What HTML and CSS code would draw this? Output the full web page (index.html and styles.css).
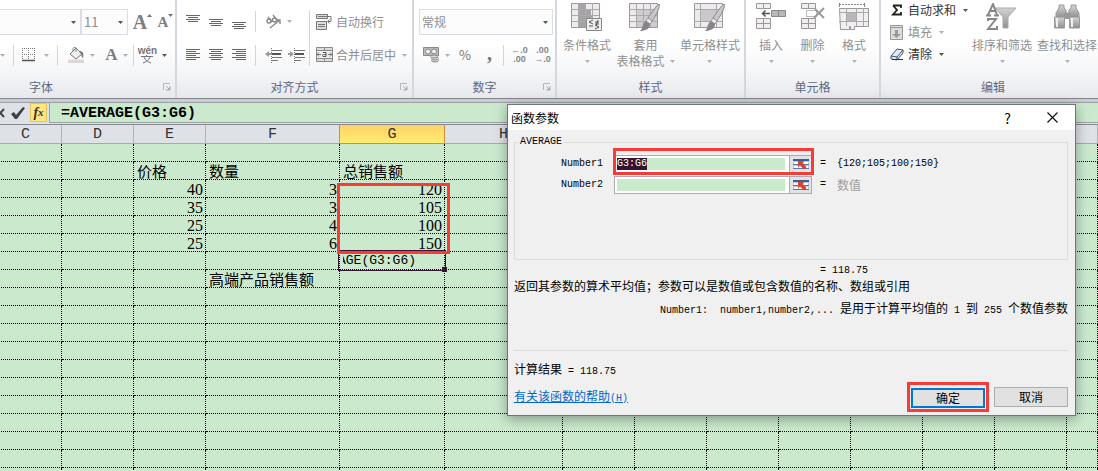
FILE: index.html
```html
<!DOCTYPE html>
<html lang="zh-CN">
<head>
<meta charset="utf-8">
<title>函数参数</title>
<link rel="stylesheet" href="styles.css">
</head>
<body>
<svg class="defs" aria-hidden="true">
  <defs>
    <linearGradient id="metal" x1="0" y1="0" x2="0" y2="1"><stop offset="0" stop-color="#d6d3d5"/><stop offset="1" stop-color="#8f8d90"/></linearGradient>
    <symbol id="arrow" viewBox="0 0 5 3"><path d="M0 0h5L2.500 3z"/></symbol>
    <symbol id="launch" viewBox="0 0 8 8"><path d="M.5 7V.5H7M3 3l3 3M7 3v4H3" fill="none" stroke="#b4b6ba"/><path d="M4 7h3V4z" fill="#a4a6aa"/></symbol>
    <symbol id="brush" viewBox="0 0 20 28"><path d="M19 0c2 2-3 11-7 17l-4-3C12 8 17 1 19 0z" fill="#c8c6c8" stroke="#8c8a8c"/><path d="M8 14l4 3-2 3-4-3z" fill="#eee" stroke="#999"/><path d="M6 17l4 3c0 5-5 7-10 7 3-2 2-8 6-10z" fill="#868487"/></symbol>
    <symbol id="picker" viewBox="0 0 16 12"><path d="M0 1h16v10H0z" fill="#b9c8e2"/><path d="M0 1h16v2H0z" fill="#3d5f9d"/><path d="M1 4h4v2H1zM6 4h4v2H6zM11 4h4v2h-4zM1 8h4v2H1zM6 8h4v2H6zM11 8h4v2h-4z" fill="#fff"/><path d="M0 6.500h6M0 10.500h16M11 6.500h5" stroke="#5877ad"/><path d="M5 3h6L9.500 5l4 4-2.500 2.500-4-4L5 9z" fill="#d8432b"/></symbol>
  </defs>
</svg>
<div class="app">
  <header class="ribbon">
    <section class="group g-font">
      <div class="rows">
        <div class="row">
          <span class="pick fontname"><select aria-label="字体"><option></option></select><svg class="dd dark"><use href="#arrow"/></svg></span>
          <span class="pick fontsize"><select aria-label="字号"><option>11</option></select><svg class="dd dark"><use href="#arrow"/></svg></span>
          <button class="tool growfont" aria-label="增大字号"><b class="glyph big">A</b><svg width="5" height="3" viewBox="0 0 5 3"><path d="M0 3L2.500 0 5 3z"/></svg></button>
          <button class="tool growfont" aria-label="减小字号"><b class="glyph small">A</b><svg width="5" height="3" viewBox="0 0 5 3"><path d="M0 0h5L2.500 3z"/></svg></button>
        </div>
        <div class="row second">
          <svg class="dd first"><use href="#arrow"/></svg><i class="sep"></i>
          <button class="tool border-tool" aria-label="边框"><svg width="14" height="14" viewBox="0 0 14 14"><path d="M.5 0v12M6.500 0v12M12.500 0v12M0 .5h13M0 6.500h13" stroke="#777" stroke-dasharray="1 1"/><path d="M0 12.500h13" stroke="#555" stroke-width="1.500"/></svg><svg class="dd"><use href="#arrow"/></svg></button><i class="sep"></i>
          <button class="tool fill-tool" aria-label="填充颜色"><svg width="17" height="16" viewBox="0 0 17 16"><path d="M2 7l6-6 6 6-6 5z" fill="#eee" stroke="#777"/><path d="M8 5V1c0-1-3-1-3 1v3" fill="none" stroke="#888"/><path d="M11 4c4 0 5 2 4 7-2-1-1-4-3-5z" fill="#777"/><path d="M0 12.500h16V16H0z" fill="#ddd5d9"/></svg><svg class="dd"><use href="#arrow"/></svg></button>
          <button class="tool w35" aria-label="字体颜色"><b class="glyph mid">A</b><svg class="dd"><use href="#arrow"/></svg></button><i class="sep"></i>
          <button class="tool w38" aria-label="拼音指南"><span class="pinyin"><b>wén</b><svg width="12" height="9" viewBox="0 0 12 9"><path d="M0 1.500h12M5 0l1 1M3 2c1 3 4 5 7 6M9 2c-1 3-4 5-7 6" fill="none" stroke="#777"/></svg></span><svg class="dd dark"><use href="#arrow"/></svg></button>
        </div>
      </div>
      <h2>字体</h2><button class="launcher" aria-label="字体设置"><svg><use href="#launch"/></svg></button>
    </section>
    <section class="group g-align">
      <div class="rows">
        <div class="row">
          <button class="tool w23" aria-label="顶端对齐"><svg width="15" height="16" viewBox="0 0 15 16"><path d="M0 1.500h14M2 3.500h10M0 5.500h14M2 7.500h10" stroke="#666"/></svg></button>
          <button class="tool w23" aria-label="垂直居中"><svg width="15" height="16" viewBox="0 0 15 16"><path d="M0 5.500h14M2 7.500h10M0 9.500h14M2 11.500h10" stroke="#666"/></svg></button>
          <button class="tool w23" aria-label="底端对齐"><svg width="15" height="16" viewBox="0 0 15 16"><path d="M0 8.500h14M2 10.500h10M0 12.500h14M2 14.500h10" stroke="#666"/></svg></button><i class="sep"></i>
          <button class="tool w35" aria-label="方向"><svg width="17" height="16" viewBox="0 0 17 16"><g fill="none" stroke="#888" stroke-width="1.400"><circle cx="4" cy="7" r="2"/><path d="M3 3l4 5M8 1l4 5"/><circle cx="9.500" cy="6" r="2"/><path d="M5 14l10-8M11 6h4v4"/></g></svg><svg class="dd"><use href="#arrow"/></svg></button>
        </div>
        <div class="row second">
          <button class="tool w23" aria-label="左对齐"><svg width="15" height="14" viewBox="0 0 15 14"><path d="M0 1.500h14M0 3.500h10M0 5.500h14M0 7.500h10M0 9.500h14M0 11.500h10" stroke="#666"/></svg></button>
          <button class="tool w23" aria-label="居中"><svg width="15" height="14" viewBox="0 0 15 14"><path d="M0 1.500h14M2 3.500h10M0 5.500h14M2 7.500h10M0 9.500h14M2 11.500h10" stroke="#666"/></svg></button>
          <button class="tool w23" aria-label="右对齐"><svg width="15" height="14" viewBox="0 0 15 14"><path d="M0 1.500h14M4 3.500h10M0 5.500h14M4 7.500h10M0 9.500h14M4 11.500h10" stroke="#666"/></svg></button><i class="sep"></i>
          <button class="tool w23" aria-label="减少缩进"><svg width="17" height="15" viewBox="0 0 17 15"><path d="M7 2.500h10M7 9.500h10M7 12.500h6" stroke="#777"/><path d="M7 6h9" stroke="#555" stroke-width="2"/><path d="M6.500 0v15" stroke="#777" stroke-dasharray="1 1"/><path d="M0 6l4-3v2h3v2H4v2z" fill="#999"/></svg></button>
          <button class="tool w23" aria-label="增加缩进"><svg width="17" height="15" viewBox="0 0 17 15"><path d="M7 2.500h10M7 9.500h10M7 12.500h6" stroke="#777"/><path d="M7 6h9" stroke="#555" stroke-width="2"/><path d="M6.500 0v15" stroke="#777" stroke-dasharray="1 1"/><path d="M6 6L2 3v2H0v2h2v2z" fill="#999"/></svg></button>
        </div>
      </div>
      <i class="sep tall"></i>
      <div class="rows">
        <div class="row"><button class="tool text"><svg width="17" height="16" viewBox="0 0 17 16"><path d="M.5.500h11v4H.5zM.5 7.500h10v8H.5z" fill="#ddd" stroke="#777"/><path d="M2 10.500h7M2 12.500h7M2 2.500h13v5h-3M13.500 5.500l-2 2 2 2" fill="none" stroke="#777"/></svg>自动换行</button></div>
        <div class="row second"><button class="tool text"><svg width="17" height="16" viewBox="0 0 17 16"><path d="M.5.500h16v14H.5zM0 3.500h16M0 11.500h16M8.500 0v4M8.500 11v4" fill="#ddd" stroke="#888"/><path d="M1 4h15v7H1z" fill="#eee"/><path d="M1 7.500h4M12 7.500h4M3 5.500l-2 2 2 2M14 5.500l2 2-2 2" fill="none" stroke="#777"/><path d="M7 5.500h3v4H7c-1.500-2 0-2 3-2" fill="none" stroke="#555"/></svg>合并后居中<svg class="dd"><use href="#arrow"/></svg></button></div>
      </div>
      <h2>对齐方式</h2><button class="launcher" aria-label="对齐设置"><svg><use href="#launch"/></svg></button>
    </section>
    <section class="group g-number">
      <div class="rows">
        <div class="row"><span class="pick format"><select aria-label="数字格式"><option>常规</option></select><svg class="dd dark"><use href="#arrow"/></svg></span></div>
        <div class="row second">
          <button class="tool w35" aria-label="会计数字格式"><svg width="17" height="16" viewBox="0 0 17 16"><path d="M.5.500h15v8H.5z" fill="#bbb" stroke="#888"/><circle cx="5" cy="4.500" r="2.500" fill="#eee" stroke="#888"/><circle cx="11" cy="4.500" r="2.500" fill="#eee" stroke="#888"/><g fill="#ddd" stroke="#888"><ellipse cx="12" cy="13.500" rx="3.500" ry="1.500"/><ellipse cx="12" cy="11.500" rx="3.500" ry="1.500"/><ellipse cx="11" cy="9.500" rx="3.500" ry="1.500"/></g></svg><svg class="dd"><use href="#arrow"/></svg></button>
          <button class="tool pct" aria-label="百分比">%</button><button class="tool comma" aria-label="千位分隔">,</button><i class="sep"></i>
          <button class="tool decimal" aria-label="增加小数位数"><span>←.0</span><span>.00</span></button>
          <button class="tool decimal" aria-label="减少小数位数"><span>.00</span><span>→.0</span></button>
        </div>
      </div>
      <h2>数字</h2><button class="launcher" aria-label="数字设置"><svg><use href="#launch"/></svg></button>
    </section>
    <section class="group g-style">
      <button class="large"><svg width="32" height="29" viewBox="0 0 32 29"><path d="M.5.500h28v24H.5z" fill="#efeaed" stroke="#999"/><path d="M8 1h6v23H8zM14 6h6v6h-6zM14 12h8v6h-8z" fill="#a5a3a6"/><path d="M0 6.500h28M0 12.500h28M0 18.500h28M7.500 0v24M14.500 0v24M21.500 0v24" fill="none" stroke="#aaa"/><path d="M15.500 15.500h15v12h-15z" fill="#eee" stroke="#888"/><path d="M22 17l-4 2 4 2M18 23h4M24 19h4M24 21h4M27 17l-2 6M24 22l4 2-4 2" fill="none" stroke="#555"/></svg><span>条件格式</span><svg class="dd"><use href="#arrow"/></svg></button>
      <button class="large table-style"><svg width="32" height="29" viewBox="0 0 32 29"><path d="M.5.500h28v24H.5z" fill="#efeaed" stroke="#999"/><path d="M7 6h21v18H7z" fill="#cfccd0"/><path d="M0 6.500h28M0 12.500h28M0 18.500h28M7.500 0v24M14.500 0v24M21.500 0v24" fill="none" stroke="#aaa"/><use href="#brush" x="11" y="1" width="20" height="28"/></svg><span>套用</span><span>表格格式<svg class="dd"><use href="#arrow"/></svg></span></button>
      <button class="large"><svg width="32" height="29" viewBox="0 0 32 29"><path d="M.5.500h28v24H.5z" fill="#efeaed" stroke="#999"/><path d="M0 6.500h28M0 18.500h28M6.500 0v24M22.500 0v24" stroke="#aaa"/><path d="M7 7h15v11H7z" fill="#cbc8cc"/><use href="#brush" x="11" y="1" width="20" height="28"/></svg><span>单元格样式</span><svg class="dd"><use href="#arrow"/></svg></button>
      <h2>样式</h2>
    </section>
    <section class="group g-cells">
      <button class="large"><svg width="32" height="29" viewBox="0 0 32 29"><path d="M1.500.500h14v5h-14zM1.500 15.500h14v10h-14zM1 20.500h14M8.500 0v5M8.500 15v11" fill="#f2edf0" stroke="#999"/><path d="M16.500 7.500h14v6h-14z" fill="#b9b7ba" stroke="#888"/><path d="M23.500 7v7" stroke="#888"/><path d="M15 10.500H8M10.500 7.500l-3 3 3 3" fill="none" stroke="#555" stroke-width="1.500"/></svg><span>插入</span><svg class="dd"><use href="#arrow"/></svg></button>
      <button class="large"><svg width="32" height="29" viewBox="0 0 32 29"><path d="M4.500.500h14v5h-14zM4.500 15.500h14v10h-14zM4 20.500h14M11.500 0v5M11.500 15v11" fill="#f2edf0" stroke="#999"/><path d="M9.500 7.500h10v6h-10z" fill="none" stroke="#777" stroke-dasharray="1 1"/><path d="M18 6l9 9M27 5L17 15" stroke="#999" stroke-width="2"/></svg><span>删除</span><svg class="dd"><use href="#arrow"/></svg></button>
      <button class="large"><svg width="32" height="29" viewBox="0 0 32 29"><path d="M1 1.500h26" stroke="#888" stroke-dasharray="2 1"/><path d="M1.500 0v4M26.500 0v4" stroke="#888"/><path d="M1.500 5.500h29v18h-14v3h-4v-3h-1v3h-9z" fill="#f2edf0" stroke="#999"/><path d="M9 9h9v10H9z" fill="#b9b7ba"/><path d="M1 9.500h29M1 18.500h29M8.500 5v18M18.500 5v18M25.500 5v18" stroke="#aaa"/></svg><span>格式</span><svg class="dd"><use href="#arrow"/></svg></button>
      <h2>单元格</h2>
    </section>
    <section class="group g-edit">
      <div class="stack">
        <button class="tool text on"><svg width="14" height="14" viewBox="0 0 14 14"><path d="M3 2.500h8V5M3 2.500l4 4.500-4 4.500h8V9" fill="none" stroke="#222" stroke-width="1.800"/></svg>自动求和<svg class="dd dark"><use href="#arrow"/></svg></button>
        <button class="tool text"><svg width="14" height="15" viewBox="0 0 14 15"><path d="M.5.500h12v14H.5z" fill="#ddd" stroke="#999"/><path d="M0 2.500h12" stroke="#999"/><path d="M5 5h3v4h3l-4.500 4L2 9h3z" fill="#999"/></svg>填充<svg class="dd"><use href="#arrow"/></svg></button>
        <button class="tool text on"><svg width="14" height="14" viewBox="0 0 14 14"><path d="M1 9l6-7 6 1v3l-6 7-6-1z" fill="#dfe9f7" stroke="#456"/><path d="M1 9l6 1 6-7M7 10v3" fill="none" stroke="#456"/><path d="M2 12.500h11" stroke="#333"/></svg>清除<svg class="dd dark"><use href="#arrow"/></svg></button>
      </div>
      <button class="large"><svg width="32" height="29" viewBox="0 0 32 29"><path d="M9 5h21l-8 9v11h-5V14z" fill="url(#metal)" stroke="#aaa"/><path d="M2 12L7 1l4 11M4 8h6M0 12.500h5M8 12.500h5M2 18v-2h8L2 26h9v-3" fill="none" stroke="#888" stroke-width="2"/></svg><span>排序和筛选</span><svg class="dd"><use href="#arrow"/></svg></button>
      <button class="large"><svg width="32" height="29" viewBox="0 0 32 29"><path d="M8 2h5v3l2 2v3h3V7l2-2V2h5v3l3 5v5H5v-5l3-5z" fill="url(#metal)" stroke="#999"/><path d="M3.500 14h10v11h-10zM18.500 14h10v11h-10z" fill="url(#metal)" stroke="#999"/><path d="M13 10h6v6h-6z" fill="#999"/><path d="M6 15v9M21 15v9" stroke="#eee" stroke-width="2"/></svg><span>查找和选择</span><svg class="dd"><use href="#arrow"/></svg></button>
      <h2>编辑</h2>
    </section>
  </header>
  <div class="formula-bar">
    <button class="fb cancel" aria-label="取消输入"><svg width="6" height="10" viewBox="0 0 6 10"><path d="M-3 1l7 8M4 1l-7 8" stroke="#444" stroke-width="2"/></svg></button>
    <button class="fb" aria-label="输入"><svg width="14" height="12" viewBox="0 0 14 12"><path d="M0 7l3-2 2 3 7-8 2 1-8 11H4z" fill="#3c4043"/></svg></button>
    <button class="fb fx" aria-label="插入函数">f<small>x</small></button>
    <input class="formula" aria-label="编辑栏" value="=AVERAGE(G3:G6)">
  </div>
  <main class="sheet">
    <table>
      <colgroup><col class="c72"><col class="c72"><col class="c72"><col class="c134"><col class="c105"><col class="c118"><col class="c72"><col class="c72"><col class="c72"><col class="c72"><col class="c72"><col class="c72"><col class="c72"><col></colgroup>
      <thead><tr><th>C</th><th>D</th><th>E</th><th>F</th><th class="active">G</th><th>H</th><th></th><th></th><th></th><th></th><th></th><th></th><th></th><th></th></tr></thead>
      <tbody>
        <tr><td></td><td></td><td></td><td></td><td></td><td></td><td></td><td></td><td></td><td></td><td></td><td></td><td></td><td></td></tr>
        <tr><td></td><td></td><td>价格</td><td>数量</td><td>总销售额</td><td></td><td></td><td></td><td></td><td></td><td></td><td></td><td></td><td></td></tr>
        <tr><td></td><td></td><td class="n">40</td><td class="n">3</td><td class="n marked">120<span class="mark"></span></td><td></td><td></td><td></td><td></td><td></td><td></td><td></td><td></td><td></td></tr>
        <tr><td></td><td></td><td class="n">35</td><td class="n">3</td><td class="n">105</td><td></td><td></td><td></td><td></td><td></td><td></td><td></td><td></td><td></td></tr>
        <tr><td></td><td></td><td class="n">25</td><td class="n">4</td><td class="n">100</td><td></td><td></td><td></td><td></td><td></td><td></td><td></td><td></td><td></td></tr>
        <tr><td></td><td></td><td class="n">25</td><td class="n">6</td><td class="n">150</td><td></td><td></td><td></td><td></td><td></td><td></td><td></td><td></td><td></td></tr>
        <tr><td></td><td></td><td></td><td></td><td class="editing"><div><span>AGE(G3:G6)</span></div><i class="cursor"></i></td><td></td><td></td><td></td><td></td><td></td><td></td><td></td><td></td><td></td></tr>
        <tr><td></td><td></td><td></td><td class="spill">高端产品销售额</td><td></td><td></td><td></td><td></td><td></td><td></td><td></td><td></td><td></td><td></td></tr>
        <tr><td></td><td></td><td></td><td></td><td></td><td></td><td></td><td></td><td></td><td></td><td></td><td></td><td></td><td></td></tr>
        <tr><td></td><td></td><td></td><td></td><td></td><td></td><td></td><td></td><td></td><td></td><td></td><td></td><td></td><td></td></tr>
        <tr><td></td><td></td><td></td><td></td><td></td><td></td><td></td><td></td><td></td><td></td><td></td><td></td><td></td><td></td></tr>
        <tr><td></td><td></td><td></td><td></td><td></td><td></td><td></td><td></td><td></td><td></td><td></td><td></td><td></td><td></td></tr>
        <tr><td></td><td></td><td></td><td></td><td></td><td></td><td></td><td></td><td></td><td></td><td></td><td></td><td></td><td></td></tr>
        <tr><td></td><td></td><td></td><td></td><td></td><td></td><td></td><td></td><td></td><td></td><td></td><td></td><td></td><td></td></tr>
        <tr><td></td><td></td><td></td><td></td><td></td><td></td><td></td><td></td><td></td><td></td><td></td><td></td><td></td><td></td></tr>
        <tr><td></td><td></td><td></td><td></td><td></td><td></td><td></td><td></td><td></td><td></td><td></td><td></td><td></td><td></td></tr>
        <tr><td></td><td></td><td></td><td></td><td></td><td></td><td></td><td></td><td></td><td></td><td></td><td></td><td></td><td></td></tr>
        <tr><td></td><td></td><td></td><td></td><td></td><td></td><td></td><td></td><td></td><td></td><td></td><td></td><td></td><td></td></tr>
        <tr><td></td><td></td><td></td><td></td><td></td><td></td><td></td><td></td><td></td><td></td><td></td><td></td><td></td><td></td></tr>
      </tbody>
    </table>
  </main>
  <div class="dialog" role="dialog" aria-labelledby="dlg-title">
    <div class="titlebar"><h1 id="dlg-title">函数参数</h1><button class="winbtn" aria-label="帮助">?</button><button class="winbtn" aria-label="关闭"><svg width="11" height="11" viewBox="0 0 11 11"><path d="M.5.500l10 10M10.500.500l-10 10" stroke="#111" stroke-width="1.200"/></svg></button></div>
    <div class="dialog-body">
      <fieldset>
        <legend class="m">AVERAGE</legend>
        <div class="arg outlined"><label class="m" for="n1">Number1</label><span class="field"><input class="m" id="n1" value="G3:G6"><button aria-label="选择区域"><svg width="16" height="12"><use href="#picker"/></svg></button></span><span class="m eq">=</span><span class="m">{120;105;100;150}</span></div>
        <div class="arg"><label class="m" for="n2">Number2</label><span class="field"><input class="m" id="n2"><button aria-label="选择区域"><svg width="16" height="12"><use href="#picker"/></svg></button></span><span class="m eq">=</span><span class="hint">数值</span></div>
      </fieldset>
      <p class="value m">= 118.75</p>
      <p class="desc">返回其参数的算术平均值；参数可以是数值或包含数值的名称、数组或引用</p>
      <p class="arg-help"><span class="m">Number1:&nbsp; number1,number2,... </span>是用于计算平均值的<span class="m"> 1 </span>到<span class="m"> 255 </span>个数值参数</p>
      <p class="result">计算结果<span class="m"> = 118.75</span></p>
      <div class="footer"><a href="#">有关该函数的帮助<span class="m">(H)</span></a><span class="ok-wrap"><button class="btn ok">确定</button></span><button class="btn">取消</button></div>
    </div>
  </div>
</div>
<script>document.getElementById("n1").select();</script>
</body>
</html>
```
FILE: styles.css
```css
*, *::before, *::after { box-sizing: border-box; }
body { margin: 0; background: #cae9cd; font: 12px/16px "Noto Sans CJK SC", sans-serif; color: #000; }
button, input, select { font: inherit; color: inherit; border: 0; border-radius: 0; background: none; padding: 0; margin: 0; outline: 0; }
h1, h2, p { margin: 0; font-size: 12px; font-weight: normal; }
svg { display: block; flex: none; overflow: hidden; }
.defs { position: absolute; width: 0; height: 0; }
.app { position: relative; height: 100vh; overflow: hidden; display: flex; flex-direction: column; }

/* ribbon */
.ribbon { display: flex; flex: none; height: 99px; color: #8f8f92; background: linear-gradient(#fff 45%, #f4f5f7 75%, #e6e8ec); border-bottom: 1px solid #85898f; }
.group { position: relative; display: flex; flex: none; align-items: flex-start; padding-bottom: 20px; border-right: 2px solid #d3d7de; }
.group h2 { position: absolute; left: 0; right: 0; bottom: 3px; text-align: center; color: #5f6880; }
.launcher { position: absolute; right: 4px; bottom: 7px; }
.launcher svg { width: 8px; height: 8px; }
.rows { display: flex; flex-direction: column; gap: 8px; padding-top: 9px; }
.row { display: flex; align-items: center; height: 25px; }
.row.second { height: 26px; }
.sep { flex: none; width: 1px; height: 21px; background: #d3d5d9; }
.sep.tall { height: 56px; margin-top: 10px; }
.dd { width: 5px; height: 3px; fill: #b0b0b3; }
.dd.dark { fill: #555; }
.tool { display: flex; flex: none; align-items: center; justify-content: center; gap: 5px; height: 22px; white-space: nowrap; }
.tool.text { gap: 3px; }
.tool.text .dd { margin-left: 3px; }
.tool.on { color: #333; }
.w23 { width: 23px; }
.border-tool { width: 43px; gap: 8px; }
.fill-tool { width: 42px; padding-left: 4px; }
.w35 { width: 33px; }
.w38 { width: 37px; }
.glyph { font-family: "Liberation Serif", serif; color: #7d7d80; }
.big { font-size: 20px; }
.mid { font-size: 17px; }
.small { font-size: 15px; }
.growfont { width: 23px; gap: 0; fill: #777; }
.growfont svg { align-self: flex-start; margin-top: 3px; }
.pinyin { display: flex; flex-direction: column; align-items: center; font: 10px/8px "Liberation Sans", sans-serif; color: #777; }
.pick { position: relative; display: flex; height: 26px; border: 1px solid #d9dde5; background: #fcfcfd; }
.pick select { width: 100%; appearance: none; padding-left: 2px; }
.pick .dd { position: absolute; right: 4px; top: 11px; }
.fontname { width: 81px; border-left: 0; }
.fontsize { width: 47px; margin-right: 3px; font-size: 13px; }
.format { width: 134px; }
.g-font { width: 177px; }
.g-font h2 { right: 93px; }
.dd.first { margin-right: 8px; }
.g-align { width: 237px; padding-left: 5px; }
.g-align .sep:not(.tall) { margin: 0 6px 0 4px; }
.g-align .sep.tall { margin-left: 1px; margin-right: 6px; }
.g-number { width: 143px; padding-left: 5px; }
.g-number .w35 { width: 35px; }
.g-number .sep { margin-right: 4px; }
.pct { width: 22px; font-size: 13px; color: #777; }
.comma { width: 27px; padding-bottom: 4px; font: bold 20px/12px "Liberation Serif", serif; color: #777; }
.decimal { flex-direction: column; gap: 0; width: 23px; font: bold 9px/9px "Liberation Sans", sans-serif; color: #858588; }
.g-style { width: 189px; padding: 3px 3px 20px 5px; justify-content: space-between; }
.large { display: flex; flex: none; flex-direction: column; align-items: center; padding: 0 1px; white-space: nowrap; }
.large > svg:first-child { margin-bottom: 5px; }
.large > .dd { margin-top: 7px; }
.large span { display: flex; align-items: center; gap: 5px; }
.g-cells { width: 135px; padding: 3px 8px 20px; justify-content: space-between; }
.g-edit { flex: 1 0 217px; padding: 3px 0 20px 9px; border-right: 0; }
.g-edit h2 { right: auto; width: 224px; }
.stack { display: flex; flex-direction: column; align-items: flex-start; width: 80px; margin-top: -4px; }
.stack .tool.text { gap: 4px; }
.g-edit .large { padding: 0 3px 0 2px; }

/* formula bar */
.formula-bar { display: flex; flex: none; align-items: center; height: 26px; padding: 4px 0 2px; background: linear-gradient(#c9ccd3 3px, #9aa0a4 3px, #9aa0a4 4px, #dee1e6 4px); border-bottom: 1px solid #858990; }
.fb { display: flex; align-items: center; height: 19px; margin-right: 5px; }
.fb.fx { justify-content: center; width: 17px; margin-right: 2px; border: 1px solid #e5c365; background: #ffe680; font: italic bold 14px/15px "Liberation Serif", serif; color: #333; }
.fb.fx small { font-size: 11px; }
.formula { flex: 1; min-width: 0; height: 20px; padding: 2px 0 0 11px; border-left: 1px solid #9aa0a8; border-bottom: 1px solid #9aa0a4; background: #cae9cd; font: bold 15px/17px "Liberation Mono", monospace; }

/* worksheet */
.sheet { flex: 1; overflow: hidden; margin-left: -10px; }
table { table-layout: fixed; width: 100%; border-spacing: 0; }
.c72 { width: 72px; } .c105 { width: 105px; } .c118 { width: 118px; } .c134 { width: 134px; }
th { height: 19px; padding: 2px 0 0; border-right: 1px solid #b0b4ba; border-bottom: 1px solid #a5a9ae; background: #dee1e6; font: 15px/16px "Liberation Mono", monospace; color: #333; }
th.active { border-color: #c8913a; background: linear-gradient(#fdd068, #ffee70); box-shadow: -1px 0 #c8913a; }
td { height: 18px; padding: 0 0 0 3px; border-right: 1px dotted #000; border-bottom: 1px dotted #000; font-size: 15px; line-height: 17px; white-space: nowrap; }
td.n { padding: 2px 2px 0 0; text-align: right; font: 16px/15px "Liberation Serif", serif; }
.marked, .editing { position: relative; }
.mark { position: absolute; z-index: 2; left: -3px; top: 3px; width: 113px; height: 71px; border: 3px solid #f93a37; }
td.editing { padding: 0; font: 13px/17px "Liberation Mono", monospace; }
.editing div { overflow: hidden; margin-left: 3px; }
.editing span { margin-left: -5px; }
.cursor { position: absolute; left: -2px; top: -2px; right: -2px; bottom: -2px; border: 1px solid #341432; }
.cursor::after { content: ""; position: absolute; right: -2px; bottom: -2px; width: 5px; height: 5px; background: #341432; }

/* dialog window */
.dialog { position: absolute; z-index: 5; left: 507px; top: 104px; width: 569px; border: 1px solid #6c7871; background: #f0f0f0; box-shadow: 0 3px 12px rgba(0, 0, 0, .35); }
.titlebar { display: flex; align-items: center; height: 25px; padding-left: 3px; background: #fff; }
.titlebar h1 { flex: 1; }
.winbtn { display: flex; align-items: center; justify-content: center; width: 45px; height: 25px; font-size: 14px; }
.dialog-body { padding: 4px 7px 3px 6px; }
.m { font-family: "Liberation Mono", monospace; font-size: 10px; white-space: pre-wrap; }
fieldset { min-width: 0; height: 126px; margin: 0; padding: 5px 0 0 46px; border: 1px solid #dcdcdc; }
legend { height: 16px; margin-left: -42px; padding: 0 2px 0 1px; }
.arg { position: relative; display: flex; align-items: center; height: 17px; margin-bottom: 4px; }
.arg label { width: 53px; }
.field { display: flex; width: 198px; height: 18px; margin-right: 8px; border: 1px solid #abadb3; background: #fff; }
.field input { flex: 1; min-width: 0; height: 12px; margin: 2px 4px 0 2px; background: #cae9cd; line-height: 12px; }
.field input::selection { background: #341432; color: #fff; }
.field button { display: flex; align-items: center; justify-content: center; width: 22px; border-left: 1px solid #abadb3; background: #e3e3e6; }
.outlined::after { content: ""; position: absolute; left: 52px; top: -7px; width: 201px; height: 27px; border: 3px solid #f93a37; pointer-events: none; }
.eq { width: 17px; }
.hint { color: #9d9d9d; }
.value { margin: 3px 0 0 306px; }
.desc { line-height: 14px; }
.arg-help { margin-top: 7px; text-align: right; }
.result { margin-top: 31px; padding-top: 10px; border-top: 1px solid #dcdcdc; }
.footer { display: flex; align-items: center; margin-top: 2px; }
.footer a { margin-right: auto; color: #0066cc; }
.ok-wrap { padding: 3px 1px 1px; margin-right: 5px; border: 3px solid #f93a37; }
.btn { width: 74px; height: 20px; border: 1px solid #adadad; background: #e1e1e1; line-height: 16px; }
.btn.ok { display: block; border: 2px solid #0078d7; }
```
